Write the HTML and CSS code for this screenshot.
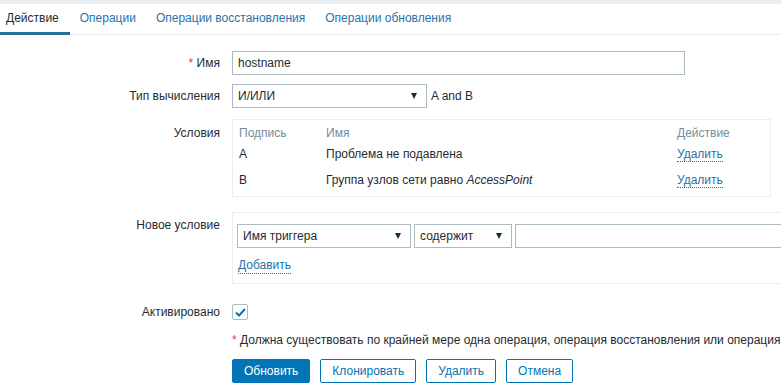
FILE: index.html
```html
<!DOCTYPE html>
<html lang="ru">
<head>
    <meta charset="UTF-8">
    <meta name="viewport" content="width=device-width, initial-scale=1.0">
    <title>Действие</title>
    <link rel="stylesheet" href="styles.css">
</head>
<body>
    <div class="top-strip"></div>
    <ul class="tabs">
        <li class="tab active">Действие</li>
        <li class="tab">Операции</li>
        <li class="tab">Операции восстановления</li>
        <li class="tab">Операции обновления</li>
    </ul>

    <form class="form">
        <div class="row row-name">
            <div class="lbl lbl-mid"><span class="req">*</span> Имя</div>
            <div class="field"><div class="input name-input">hostname</div></div>
        </div>

        <div class="row row-type">
            <div class="lbl lbl-mid">Тип вычисления</div>
            <div class="field inline">
                <div class="select type-select"><span>И/ИЛИ</span><span class="arrow"></span></div>
                <span class="formula">A and B</span>
            </div>
        </div>

        <div class="row row-cond">
            <div class="lbl lbl-top">Условия</div>
            <div class="field">
                <div class="box cond-box">
                    <table class="cond-table">
                        <tr class="head">
                            <th class="c-label">Подпись</th>
                            <th class="c-name">Имя</th>
                            <th class="c-act">Действие</th>
                        </tr>
                        <tr>
                            <td>A</td>
                            <td>Проблема не подавлена</td>
                            <td><a class="link">Удалить</a></td>
                        </tr>
                        <tr>
                            <td>B</td>
                            <td>Группа узлов сети равно <i>AccessPoint</i></td>
                            <td><a class="link">Удалить</a></td>
                        </tr>
                    </table>
                </div>
            </div>
        </div>

        <div class="row row-new">
            <div class="lbl lbl-new">Новое условие</div>
            <div class="field">
                <div class="box new-box">
                    <div class="inline tight">
                        <div class="select trig-select"><span>Имя триггера</span><span class="arrow"></span></div>
                        <div class="select op-select"><span>содержит</span><span class="arrow"></span></div>
                        <div class="input value-input"></div>
                    </div>
                    <a class="link add-link">Добавить</a>
                </div>
            </div>
        </div>

        <div class="row row-active">
            <div class="lbl lbl-mid">Активировано</div>
            <div class="field">
                <span class="checkbox">
                    <svg width="11" height="9" viewBox="0 0 11 9"><path d="M1 4.5 L4 7.5 L10 1" fill="none" stroke="#0275b8" stroke-width="2"/></svg>
                </span>
            </div>
        </div>

        <div class="row row-note">
            <div class="lbl"></div>
            <div class="field note"><span class="req">*</span> Должна существовать по крайней мере одна операция, операция восстановления или операция обновления.</div>
        </div>

        <div class="row row-buttons">
            <div class="lbl"></div>
            <div class="field buttons">
                <button type="button" class="btn primary">Обновить</button>
                <button type="button" class="btn">Клонировать</button>
                <button type="button" class="btn">Удалить</button>
                <button type="button" class="btn">Отмена</button>
            </div>
        </div>
    </form>
</body>
</html>
```

FILE: styles.css
```css
html, body {
    overflow: hidden;
}

body {
    margin: 0;
    background-color: #ffffff;
    font-family: "Liberation Sans", Arial, sans-serif;
    font-size: 12px;
    line-height: 16px;
    color: #1f2c33;
}

.top-strip {
    height: 4px;
    background-color: #ebeef0;
}

.tabs {
    display: flex;
    list-style: none;
    margin: 0;
    padding: 0;
    height: 30px;
    border-bottom: 1px solid #ebeef0;
}

.tab {
    padding: 0 10px;
    line-height: 29px;
    color: #2a72a8;
    white-space: nowrap;
    border-bottom: 3px solid transparent;
    margin-bottom: -1px;
}

.tab:first-child {
    padding-left: 6px;
    padding-right: 11px;
}

.tab.active {
    color: #1f2c33;
    border-bottom-color: #2a6f99;
}

.form {
    padding-top: 16px;
}

.row {
    display: grid;
    grid-template-columns: 220px auto;
    column-gap: 12px;
    white-space: nowrap;
}

.lbl {
    text-align: right;
}

.lbl-mid {
    align-self: center;
}

.lbl-top {
    padding-top: 6px;
}

.lbl-new {
    padding-top: 5px;
}

.req {
    color: #e33734;
}

.row-name {
    margin-bottom: 9px;
}

.row-type {
    margin-bottom: 11px;
}

.row-cond {
    margin-bottom: 15px;
}

.row-new {
    margin-bottom: 19px;
}

.row-active {
    margin-bottom: 12px;
}

.row-note {
    margin-bottom: 11px;
}

.inline {
    display: flex;
    align-items: center;
}

.tight {
    gap: 3px;
}

.input,
.select {
    box-sizing: border-box;
    height: 24px;
    line-height: 22px;
    border: 1px solid #acbbc2;
    background-color: #ffffff;
    padding: 0 5px;
}

.name-input {
    width: 453px;
}

.select {
    display: flex;
    justify-content: space-between;
    align-items: center;
}

.arrow {
    width: 0;
    height: 0;
    border-left: 3px solid transparent;
    border-right: 3px solid transparent;
    border-top: 6px solid #1f2c33;
    margin-right: 4px;
}

.type-select {
    width: 195px;
}

.formula {
    margin-left: 4px;
}

.box {
    box-sizing: border-box;
    border: 1px solid #ebeef0;
}

.cond-box {
    width: 539px;
    padding: 5px 6px 3px 6px;
}

.cond-table {
    width: 100%;
    border-collapse: collapse;
}

.cond-table th {
    font-weight: normal;
    text-align: left;
    color: #768d99;
    height: 16px;
    padding: 0;
}

.cond-table td {
    height: 26px;
    padding: 0;
}

.c-label {
    width: 87px;
}

.c-act {
    width: 87px;
}

.link {
    color: #2a72a8;
    text-decoration: none;
    border-bottom: 1px dotted #2a72a8;
    cursor: pointer;
}

.new-box {
    padding: 11px 5px 9px 4px;
    width: 620px;
}

.trig-select {
    width: 174px;
}

.op-select {
    width: 98px;
}

.value-input {
    width: 330px;
}

.add-link {
    display: inline-block;
    margin-top: 10px;
    margin-left: 1px;
    line-height: 15px;
}

.checkbox {
    box-sizing: border-box;
    display: flex;
    align-items: center;
    justify-content: center;
    width: 16px;
    height: 16px;
    margin-top: 1px;
    border: 1px solid #acbbc2;
    border-radius: 2px;
}

.note {
    line-height: 16px;
}

.buttons {
    display: flex;
    gap: 10px;
}

.btn {
    height: 24px;
    padding: 0 11px;
    font-family: "Liberation Sans", Arial, sans-serif;
    font-size: 12px;
    color: #0275b8;
    background-color: #ffffff;
    border: 1px solid #0275b8;
    border-radius: 2px;
    cursor: pointer;
}

.btn.primary {
    background-color: #0275b8;
    color: #ffffff;
    padding: 0 11px;
}
```
